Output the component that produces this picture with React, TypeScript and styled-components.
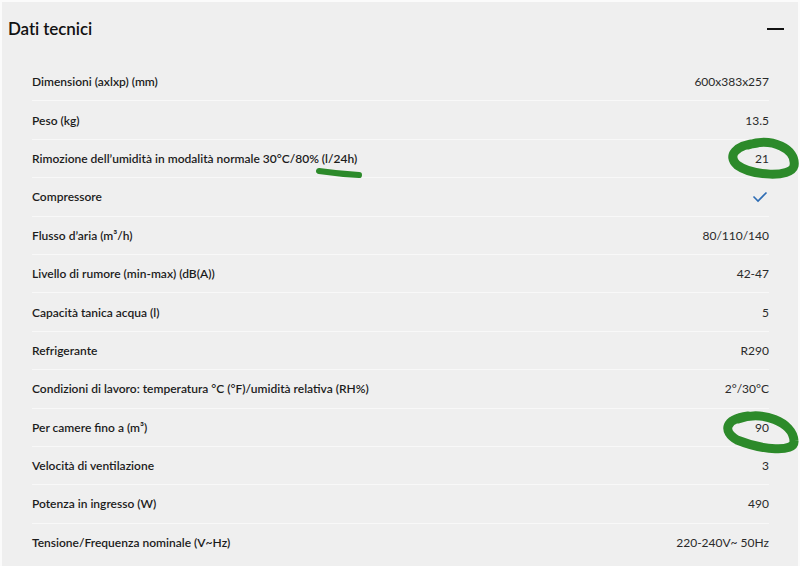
import { FC } from 'react';
import styled, { createGlobalStyle } from 'styled-components';

type SpecRow = {
    label: string
    value?: string
    check?: boolean
}

const rows: SpecRow[] = [
    { label: 'Dimensioni (axlxp) (mm)', value: '600x383x257' },
    { label: 'Peso (kg)', value: '13.5' },
    { label: 'Rimozione dell’umidità in modalità normale 30°C/80% (l/24h)', value: '21' },
    { label: 'Compressore', check: true },
    { label: 'Flusso d’aria (m³/h)', value: '80/110/140' },
    { label: 'Livello di rumore (min-max) (dB(A))', value: '42-47' },
    { label: 'Capacità tanica acqua (l)', value: '5' },
    { label: 'Refrigerante', value: 'R290' },
    { label: 'Condizioni di lavoro: temperatura °C (°F)/umidità relativa (RH%)', value: '2°/30°C' },
    { label: 'Per camere fino a (m³)', value: '90' },
    { label: 'Velocità di ventilazione', value: '3' },
    { label: 'Potenza in ingresso (W)', value: '490' },
    { label: 'Tensione/Frequenza nominale (V~Hz)', value: '220-240V~ 50Hz' },
];

const GlobalStyle = createGlobalStyle`
    html, body {
        margin: 0;
        padding: 0;
        background: #fbfbfb;
    }
    body {
        font-family: Lato, "Open Sans", sans-serif;
        -webkit-font-smoothing: antialiased;
    }
`;

const Page = styled.div`
    position: relative;
    width: 800px;
    height: 566px;
    overflow: hidden;
    box-sizing: border-box;
    padding: 2px 2px 0 2px;
`;

const Panel = styled.section`
    height: 100%;
    background-color: #efefef;
    display: flex;
    flex-direction: column;
`;

const Head = styled.header`
    height: 61px;
    flex-shrink: 0;
    display: flex;
    align-items: center;
    justify-content: space-between;
    box-sizing: border-box;
    padding: 0 14px 8px 6px;
`;

const Title = styled.h2`
    margin: 0;
    font-size: 17px;
    font-weight: 600;
    color: #111;
    letter-spacing: -0.1px;
`;

const Minus = styled.span`
    display: block;
    width: 17px;
    height: 2px;
    background-color: #111;
`;

const List = styled.ul`
    list-style: none;
    margin: 0;
    padding: 0 29px 0 30px;
`;

const Row = styled.li`
    height: 38.4px;
    display: flex;
    align-items: center;
    justify-content: space-between;
    box-sizing: border-box;
    border-bottom: 1px solid #f8f8f8;

    &:last-child {
        border-bottom: none;
    }
`;

const Label = styled.span`
    font-size: 12px;
    font-weight: 600;
    color: #1c1c1c;
`;

const Value = styled.span`
    font-size: 12px;
    color: #2a2a2a;
`;

const Check = styled.svg`
    width: 16px;
    height: 12px;
    margin-right: 1px;
`;

const Marks = styled.svg`
    position: absolute;
    top: 0;
    left: 0;
    pointer-events: none;
`;

const Ink = styled.path`
    fill: none;
    stroke: #2c8a2a;
    stroke-linecap: round;
    stroke-linejoin: round;
`;

const App: FC = () => {
    return <Page>
        <GlobalStyle />
        <Panel>
            <Head>
                <Title>Dati tecnici</Title>
                <Minus />
            </Head>
            <List>
                {
                    rows.map(r => {
                        return <Row key={r.label}>
                            <Label>{r.label}</Label>
                            {
                                r.check
                                    ? <Check viewBox="0 0 16 12">
                                        <polyline points="1.5,5.5 6,10 14.5,1.5" fill="none" stroke="#2d6cb4" strokeWidth="1.6" />
                                    </Check>
                                    : <Value>{r.value}</Value>
                            }
                        </Row>
                    })
                }
            </List>
        </Panel>
        {/* annotazioni a mano sopra lo screenshot */}
        <Marks width="800" height="566" viewBox="0 0 800 566">
            <Ink strokeWidth="9" d="M 748 145 C 772 137, 797 149, 794 166 C 791 178, 752 176, 737 165 C 727 156, 735 145, 758 143" />
            <Ink strokeWidth="6" d="M 319 171 Q 340 174 359 175" />
            <Ink strokeWidth="9" d="M 738 419 C 762 410, 793 422, 794 441 C 795 453, 762 450, 737 440 C 722 431, 725 419, 748 416" />
        </Marks>
    </Page>
}

export default App;
